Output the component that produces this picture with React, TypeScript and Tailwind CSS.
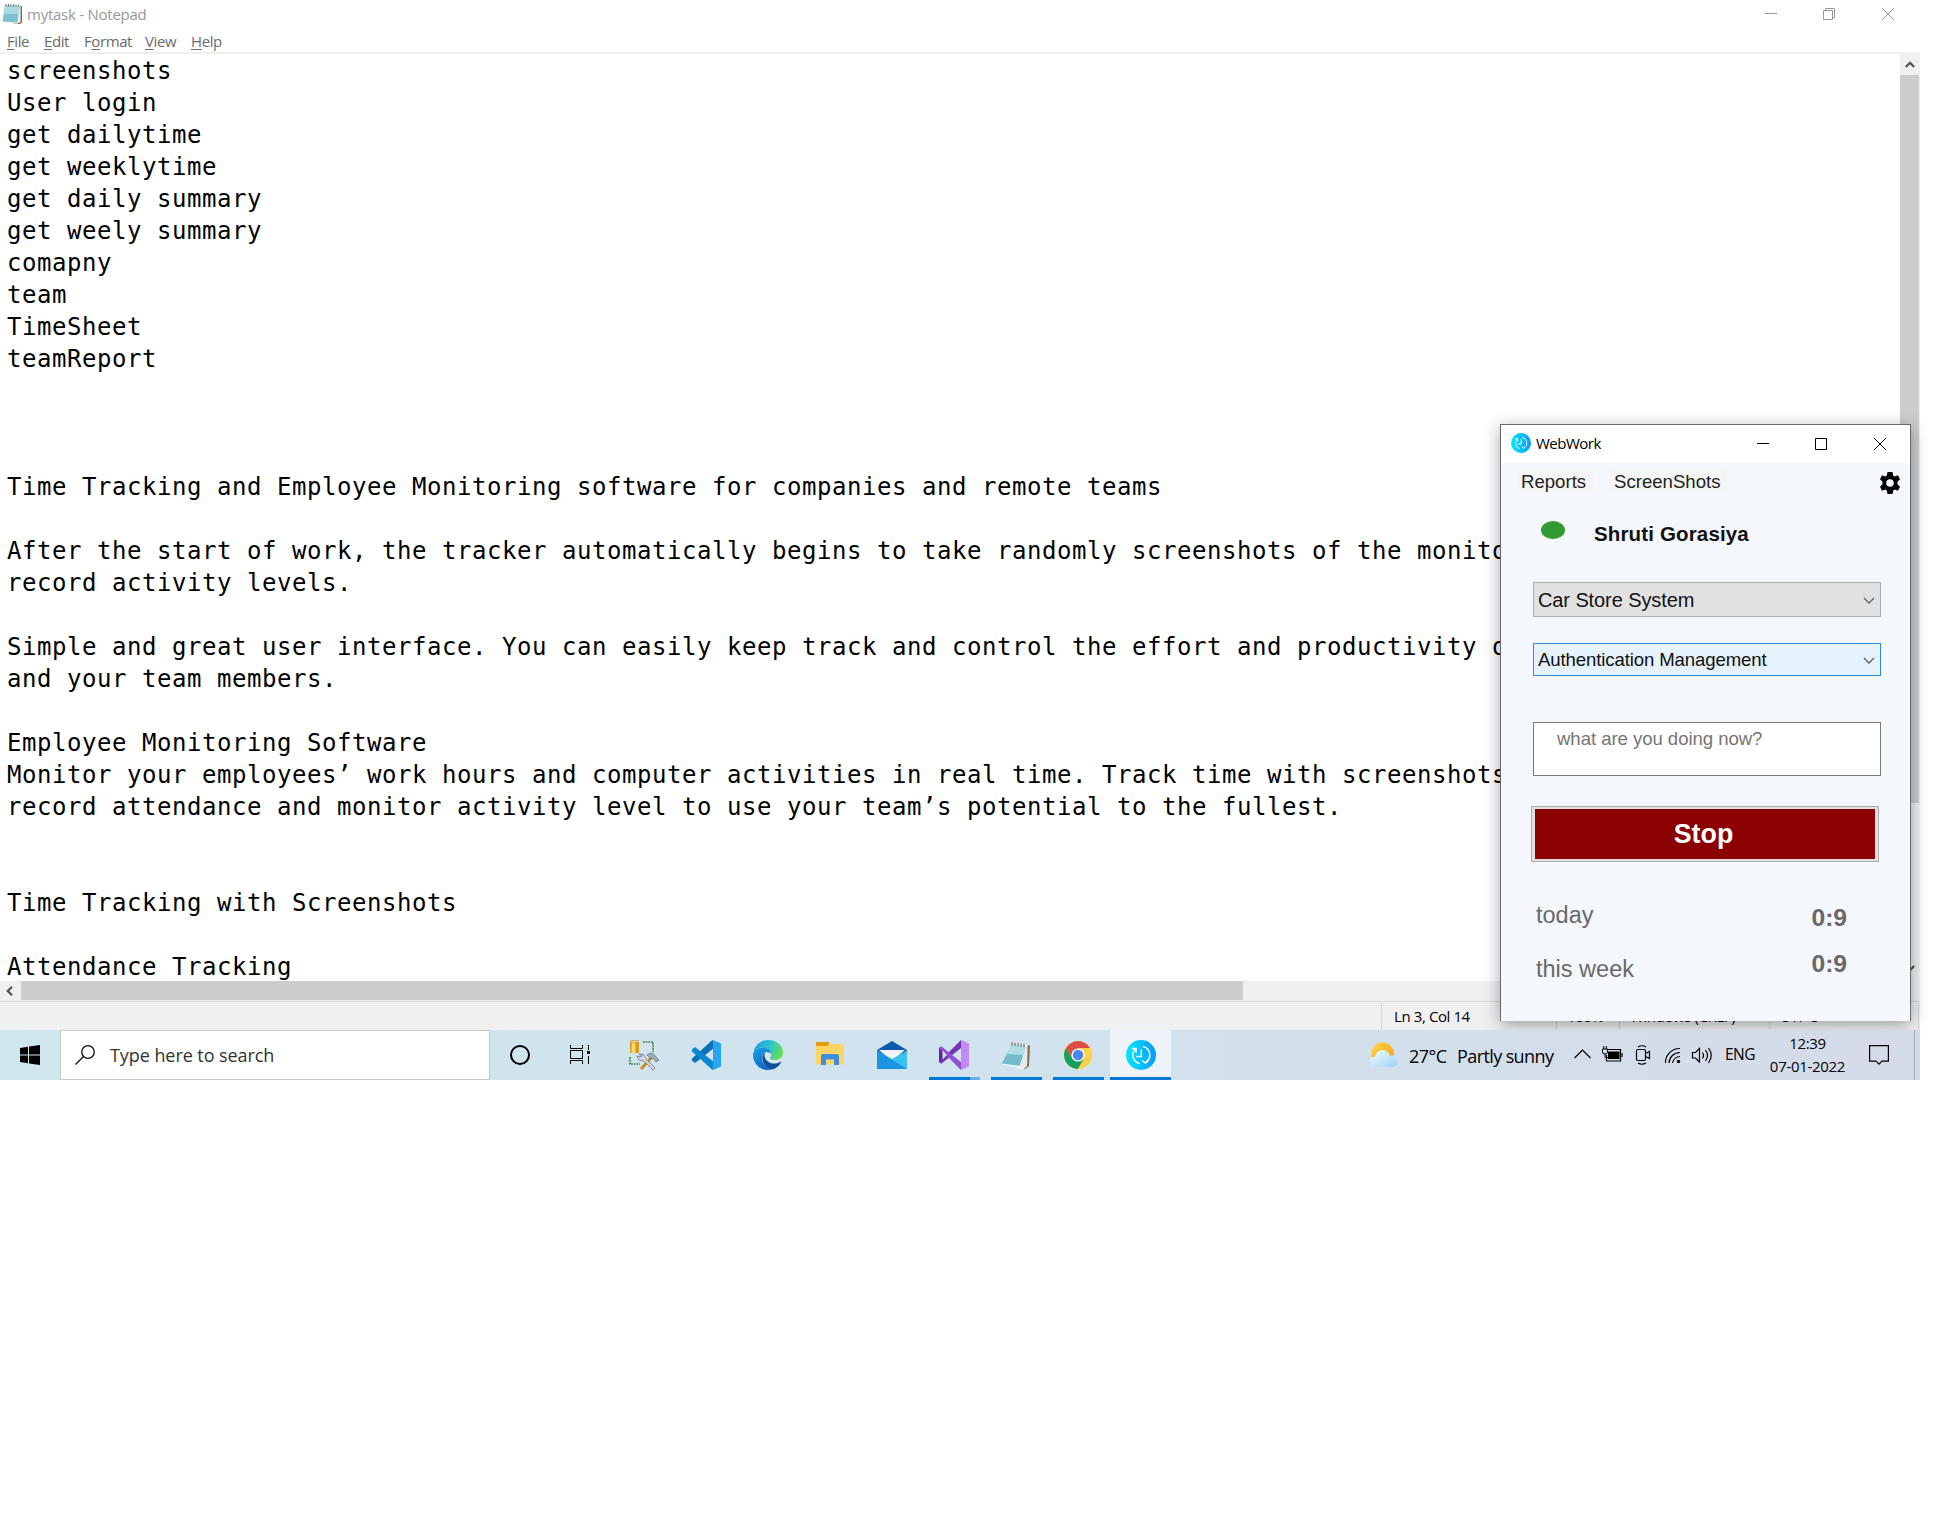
import React from "react";

const NOTE_LINES = [
  "screenshots",
  "User login",
  "get dailytime",
  "get weeklytime",
  "get daily summary",
  "get weely summary",
  "comapny",
  "team",
  "TimeSheet",
  "teamReport",
  "",
  "",
  "",
  "Time Tracking and Employee Monitoring software for companies and remote teams",
  "",
  "After the start of work, the tracker automatically begins to take randomly screenshots of the monitor",
  "record activity levels.",
  "",
  "Simple and great user interface. You can easily keep track and control the effort and productivity of",
  "and your team members.",
  "",
  "Employee Monitoring Software",
  "Monitor your employees’ work hours and computer activities in real time. Track time with screenshots,",
  "record attendance and monitor activity level to use your team’s potential to the fullest.",
  "",
  "",
  "Time Tracking with Screenshots",
  "",
  "Attendance Tracking",
];

function NotepadIcon({ className }: { className: string }) {
  return (
    <svg viewBox="0 0 30 30" className={className}>
      <path d="M10 3 29 5.500 28 26 24 29 22 27Z" fill="#86704d" />
      <path d="M10 3 26.500 5 26 26 22 29 2 24.500Z" fill="#f3f6f6" />
      <path d="M10.500 4.500 25 7 18.500 26 1 23.500Z" fill="#74bccb" />
      <path d="M10.500 5 25 7.500 22 15 6 14Z" fill="#b1dde4" />
      <path d="M19 26 25.500 8 25 26 22 28.500Z" fill="#e4e8ea" />
      <path d="M11 2.500v3M14 2.800v3M17 3.200v3M20 3.600v3M23 4v3" stroke="#555" strokeWidth="1" />
    </svg>
  );
}

function NotepadTitleIcon() {
  return (
    <svg viewBox="0 0 20 20" className="ml-[2px] mt-[4px] h-[20px] w-[20px]">
      <path d="M4 1.500 20 2V19L17.500 20 5 18.500Z" fill="#86704d" />
      <path d="M3 1.500 18.500 2V18L15 19.500 1.500 18.500Z" fill="#eef3f4" />
      <path d="M3 1.500 17.500 2.500 15.500 18.500.5 17.500Z" fill="#7cc2d0" />
      <path d="M3 2 17.500 3 16.500 10 2 10Z" fill="#a9dbe4" />
      <path d="M4 0v2.500M6.500 0v2.500M9 0v2.500M11.500.2v2.500M14 .4v2.500M16.500.6v2.500" stroke="#777" strokeWidth="1" />
    </svg>
  );
}

function WebWorkIcon({ className, id }: { className: string; id: string }) {
  return (
    <svg viewBox="0 0 30 30" className={className}>
      <defs>
        <linearGradient id={id} x1="0" x2="1" y1="0" y2="0">
          <stop offset="0" stopColor="#00e8ff" />
          <stop offset="1" stopColor="#0a99ff" />
        </linearGradient>
      </defs>
      <circle cx="15" cy="15" r="15" fill={`url(#${id})`} />
      <g fill="none" stroke="#fff" strokeWidth="1.500">
        <path d="M9.800 8.500A8.700 8.700 0 0 0 13.800 23.600" />
        <path d="M5.800 8.500h4.200v4.500" />
        <path d="M17 6.600A8.700 8.700 0 0 1 19.500 22.600M16 20.500l3.300 2.500 3-3.500" />
        <path d="M15.300 9.500v7h-5" />
      </g>
    </svg>
  );
}

function Chevron({ className, stroke }: { className: string; stroke: string }) {
  return (
    <svg viewBox="0 0 12 7" className={className} fill="none" stroke={stroke} strokeWidth="1.300">
      <path d="M1 1l5 5 5-5" />
    </svg>
  );
}

function Notepad() {
  return (
    <section className="flex h-[1030px] flex-col bg-white">
      <header className="flex h-[30px] items-start text-[#999]">
        <NotepadTitleIcon />
        <span className="ml-[5px] w-[1738px] text-[15px] leading-[29px] tracking-[-0.25px]">mytask - Notepad</span>
        <svg viewBox="0 0 130 14" className="mt-[7px] h-[14px] w-[130px]" fill="none" stroke="#999">
          <path d="M0 6.500h12M58.500 3.500h9v9h-9zM60.500 3.500v-2h9v9h-2" />
          <path d="M117 1l12 12M129 1l-12 12" />
        </svg>
      </header>
      <nav className="flex h-[22px] pl-[7px] text-[15px] leading-[23px] tracking-[-0.4px] text-[#6b6b6b]">
        <span className="w-[37px]"><u className="underline-offset-2">F</u>ile</span>
        <span className="w-[40px]"><u className="underline-offset-2">E</u>dit</span>
        <span className="w-[61px]">F<u className="underline-offset-2">o</u>rmat</span>
        <span className="w-[46px]"><u className="underline-offset-2">V</u>iew</span>
        <span><u className="underline-offset-2">H</u>elp</span>
      </nav>
      <div className="h-[2px] shrink-0 bg-[#f0f0f0]" />
      <div className="flex h-[927px]">
        <pre className="w-[1900px] overflow-hidden pl-[7px] pt-px font-['DejaVu_Sans_Mono',monospace] text-[24px] leading-[32px] tracking-[0.552px] text-black">
          {NOTE_LINES.join("\n")}
        </pre>
        <div className="flex w-[20px] flex-col items-center bg-[#f0f0f0]">
          <div className="flex h-[21px] items-center">
            <svg viewBox="0 0 10 7" className="mr-px h-[7px] w-[10px]" fill="none" stroke="#505050" strokeWidth="2.200">
              <path d="M.8 6 5 1.800 9.200 6" />
            </svg>
          </div>
          <div className="mr-px h-[728px] w-[19px] bg-[#cdcdcd]" />
          <svg viewBox="0 0 10 7" className="mt-[162px] h-[7px] w-[10px]" fill="none" stroke="#505050" strokeWidth="2.200">
            <path d="M.8 1 5 5.200 9.200 1" />
          </svg>
        </div>
      </div>
      <div className="flex h-[20px] bg-[#f0f0f0]">
        <div className="flex w-[21px] items-center pl-[6px]">
          <svg viewBox="0 0 7 10" className="h-[10px] w-[7px]" fill="none" stroke="#505050" strokeWidth="2.200">
            <path d="M6 .8 1.800 5 6 9.200" />
          </svg>
        </div>
        <div className="h-[19px] w-[1222px] bg-[#cdcdcd]" />
      </div>
      <footer className="flex h-[29px] border-t border-[#d7d7d7] bg-[#f0f0f0] pt-px text-[15px] leading-[26px] tracking-[-0.4px] text-black">
        <span className="ml-[1381px] h-[26px] w-[175px] border-l border-[#d4d4d4] pl-[12px]">Ln 3, Col 14</span>
        <span className="h-[26px] w-[63px] border-l border-[#d4d4d4] pl-[10px]">100%</span>
        <span className="h-[26px] w-[150px] border-l border-[#d4d4d4] pl-[10px]">Windows (CRLF)</span>
        <span className="h-[26px] w-[150px] border-x border-[#d4d4d4] pl-[10px]">UTF-8</span>
      </footer>
    </section>
  );
}

function WebWork() {
  return (
    <section className="absolute left-[1500px] top-[424px] flex h-[597px] w-[411px] flex-col border border-b-0 border-[#66686b] bg-[#f4f7fc] font-['Liberation_Sans',sans-serif] shadow-[0_4px_16px_rgba(0,0,0,0.35)]">
      <header className="flex h-[38px] items-center bg-white font-['Open_Sans','Noto_Sans',sans-serif]">
        <WebWorkIcon id="ww-title" className="mb-[2px] ml-[10px] h-[20px] w-[20px]" />
        <span className="mb-px ml-[5px] w-[220px] text-[15px] tracking-[-0.5px] text-black">WebWork</span>
        <svg viewBox="0 0 131 14" className="h-[14px] w-[131px]" fill="none" stroke="#000">
          <path d="M1 6.500h12M59.500 1.500h11v11h-11z" />
          <path d="M118 1l12 12M130 1l-12 12" />
        </svg>
      </header>
      <nav className="flex h-[58px] items-start pl-[17px] pt-[7px] text-[18.600px] leading-[22px] text-[#222]">
        <span className="h-[21px] w-[75px] bg-[#f5f5f5] pl-[3px] pt-px">Reports</span>
        <span className="ml-[17px] h-[21px] w-[117px] bg-[#f5f5f5] pl-[4px] pt-px">ScreenShots</span>
        <svg viewBox="0 0 20 22" className="ml-[153px] mt-[2px] h-[22px] w-[20px]">
          <path
            fillRule="evenodd"
            d="M7.500 0h5l.7 3.500 1.500.9L18 3.200l2 4-2.500 2.500v2.600L20 14.800l-2 4-3.300-1.200-1.500.9-.7 3.500h-5l-.7-3.500-1.500-.9L2 18.800l-2-4 2.500-2.500V9.700L0 7.200l2-4 3.300 1.200 1.500-.9ZM10 7.200a3.800 3.800 0 1 0 0 7.600 3.800 3.800 0 0 0 0-7.600Z"
            fill="#000"
          />
        </svg>
      </nav>
      <div className="flex h-[61px] pl-[40px]">
        <div className="h-[18px] w-[24px] rounded-[50%] bg-[#339933]" />
        <span className="ml-[29px] text-[20.500px] font-bold leading-[25px] tracking-[0.15px] text-[#111]">Shruti Gorasiya</span>
      </div>
      <div className="ml-[32px] flex h-[35px] w-[348px] items-center justify-between border border-[#adadad] bg-[#e1e1e1] pl-[4px] pr-[5px] text-[20px] text-[#111]">
        <span className="tracking-[-0.1px]">Car Store System</span>
        <Chevron className="mt-[2px] h-[7px] w-[12px]" stroke="#606060" />
      </div>
      <div className="ml-[32px] mt-[26px] flex h-[33px] w-[348px] items-center justify-between border border-[#2a8ddd] bg-[#e5f1fb] pl-[4px] pr-[5px] text-[18.600px] text-[#111]">
        <span className="pt-px tracking-[-0.12px]">Authentication Management</span>
        <Chevron className="mt-[2px] h-[7px] w-[12px]" stroke="#606060" />
      </div>
      <div className="ml-[32px] mt-[46px] h-[54px] w-[348px] border border-[#7a7a7a] bg-white pl-[23px] pt-[4px] text-[18.600px] leading-[24px] tracking-[-0.06px] text-[#757575]">
        what are you doing now?
      </div>
      <button className="ml-[30px] mt-[30px] flex h-[56px] w-[348px] items-center justify-center border border-[#adadad] bg-[#e1e1e1] p-[3px]">
        <span className="flex h-[50px] w-[340px] items-center justify-center bg-[#8b0000] pr-[3px] pt-px text-[26.800px] font-bold text-white">Stop</span>
      </button>
      <div className="flex h-[150px] justify-between pl-[35px] pr-[63px] text-[#696969]">
        <div className="flex flex-col pt-[38px] text-[23.500px] leading-[30px]">
          <span className="mb-[24px]">today</span>
          <span>this week</span>
        </div>
        <div className="flex flex-col pt-[41px] text-[24.600px] font-bold leading-[30px]">
          <span className="mb-[16px]">0:9</span>
          <span>0:9</span>
        </div>
      </div>
    </section>
  );
}

function SqlToolsIcon() {
  return (
    <svg viewBox="0 0 30 30" className="h-[30px] w-[30px]">
      <rect x="1" y="1" width="9" height="12" rx="1.500" fill="#d9961a" />
      <rect x="2.500" y="1" width="4" height="12" fill="#fbd775" />
      <ellipse cx="5.500" cy="1.600" rx="4.500" ry="1.300" fill="#f3d78b" stroke="#9b7420" strokeWidth=".5" />
      <path d="M14 2h10v10M1 17v7h10" fill="none" stroke="#3d7a41" strokeWidth="1.700" strokeDasharray="1.700 1" />
      <path d="M12 29 23 17" stroke="#c98d1e" strokeWidth="3" />
      <path d="M18 15c3-3 7-2 9 2l3 3-3 2-2-3-4-1Z" fill="#9fa9bc" stroke="#626b7c" strokeWidth=".7" />
      <path d="M10 14l5 1 2 4 9 9-2 2-9-9-5-1-2-4 4 1 1-1Z" fill="#d3d9e4" stroke="#6c7484" strokeWidth=".8" />
    </svg>
  );
}

function VsCodeIcon() {
  return (
    <svg viewBox="0 0 30 30" className="h-[30px] w-[30px]">
      <path d="M22 0 23 8 4 23 .8 20.500V18.800L20 1.200Z" fill="#0b70b8" />
      <path d="M22 30 23 22 4 7 .8 9.500v1.700L20 28.800Z" fill="#0d86d4" />
      <path d="M22 0 30 3.500v23L22 30Z" fill="#25a5f2" />
    </svg>
  );
}

function EdgeIcon() {
  return (
    <svg viewBox="0 0 30 30" className="h-[30px] w-[30px]">
      <defs>
        <linearGradient id="edge-top" x1="0" x2="1" y1="0.300" y2="0.600">
          <stop offset="0" stopColor="#1b9de2" />
          <stop offset=".5" stopColor="#2cc4cf" />
          <stop offset="1" stopColor="#67e04b" />
        </linearGradient>
        <linearGradient id="edge-left" x1="0" x2="0.500" y1="0" y2="1">
          <stop offset="0" stopColor="#1da1e6" />
          <stop offset="1" stopColor="#0668c8" />
        </linearGradient>
      </defs>
      <path d="M.5 12C2 5 8 0 15 0c9 0 15 6 15 12.500 0 5-4 7.500-8 7.500-3 0-5-1-5-2 0-.8 1.500-1.500 1.500-4C18.500 10 14 7.500 9.500 7.500 5 7.500 2 9.500.5 12Z" fill="url(#edge-top)" />
      <path d="M0 15C0 11 4 7.500 9.500 7.500c4.500 0 9 2.500 9 6.500-1-1.200-2.500-2-4.500-2-3.500 0-5 3-5 6 0 6 5 11 10 11.500C8 32 0 24 0 15Z" fill="url(#edge-left)" />
      <path d="M12 12.500C7 15 9 28 19 29.500c4-.9 7-3.500 9-7 .3-.7-.2-1-1-.5-7 4-15 0-15.500-6.500 0-1 .1-2 .5-3Z" fill="#11509e" />
    </svg>
  );
}

function ExplorerIcon() {
  return (
    <svg viewBox="0 0 28 24" className="mb-[2px] h-[24px] w-[28px]">
      <path d="M0 1q0-1 1-1h11q1.500 0 1.500 1.500V5H0Z" fill="#e39c05" />
      <path d="M0 4h11l2.500-2H27q1 0 1 1v18.500q0 1-1 1H1q-1 0-1-1Z" fill="#fed563" />
      <path d="M5 23V14q0-2 2-2h14q2 0 2 2v9h-5v-5.500h-8V23Z" fill="#3b8fdc" />
    </svg>
  );
}

function MailIcon() {
  return (
    <svg viewBox="0 0 30 28" className="h-[28px] w-[30px]">
      <path d="M0 9 15 0l15 9v8H0Z" fill="#0a5bab" />
      <path d="M2 9h26L15 20Z" fill="#f3f4f5" />
      <path d="M0 9.500 15 18l15-8.500V28H0Z" fill="#39c1f2" />
      <path d="M0 9.500V28h30Z" fill="#1b94e1" />
    </svg>
  );
}

function VisualStudioIcon() {
  return (
    <svg viewBox="0 0 30 30" className="h-[30px] w-[30px]">
      <path d="M0 8 2.500 6.500 4.500 9v12l-2 2.500L0 22Z" fill="#6026a2" />
      <path d="M2.500 23.500 22 8V0L0 22Z" fill="#7433b4" />
      <path d="M2.500 6.500 22 22v8L0 8Z" fill="#9350ce" />
      <path d="M3.500 10.500v9L8 15Z" fill="#d1e4ee" />
      <path d="M22 0 30 3.500v23L22 30Z" fill="#c18af4" />
    </svg>
  );
}

function ChromeIcon() {
  return (
    <svg viewBox="0 0 28 28" className="h-[28px] w-[28px]">
      <circle cx="14" cy="14" r="14" fill="#ffd04a" />
      <path d="M14 14V7h12.100A14 14 0 0 0 1.900 7l6 10.500Z" fill="#dc4f42" />
      <path d="M14 14 20 17.500 14 28A14 14 0 0 1 1.900 7L8 17.500Z" fill="#159e5c" />
      <path d="M14 7h12.100A14 14 0 0 1 14 28l6-10.500Z" fill="#ffd04a" />
      <circle cx="14" cy="14" r="6.600" fill="#fff" />
      <circle cx="14" cy="14" r="5.200" fill="#4a86ee" />
    </svg>
  );
}

function WeatherIcon() {
  return (
    <svg viewBox="0 0 28 26" className="h-[26px] w-[28px]">
      <defs>
        <linearGradient id="sun" x1="0" x2="1" y1="0" y2="1">
          <stop offset="0" stopColor="#ffd84d" />
          <stop offset="1" stopColor="#f59a0b" />
        </linearGradient>
        <linearGradient id="cloud" x1="0" x2="1" y1="0" y2="1">
          <stop offset="0" stopColor="#f4fbff" />
          <stop offset="1" stopColor="#9fd2f3" />
        </linearGradient>
      </defs>
      <circle cx="12.500" cy="11.800" r="11.300" fill="url(#sun)" />
      <path d="M5 25a5.300 5.300 0 0 1 0-10.500C7 6 18 6 20 13.500c4-.5 7.500 2 7.500 5.800S25 25 22 25Z" fill="url(#cloud)" />
    </svg>
  );
}

function TaskButton({ children, bar, active }: { children: React.ReactNode; bar?: "one" | "many"; active?: boolean }) {
  return (
    <div className={active ? "flex h-[50px] w-[61px] flex-col items-center bg-[#edf3f9]" : "flex h-[50px] w-[62px] flex-col items-center"}>
      <div className="flex h-[47px] items-center pt-[3px]">{children}</div>
      {bar && (
        <div className={active ? "flex h-[3px] w-full" : "flex h-[3px] w-[51px]"}>
          <div className="flex-1 bg-[#0078d7]" />
          {bar === "many" && <div className="w-[10px] bg-[#6aafe6]" />}
        </div>
      )}
    </div>
  );
}

function Taskbar() {
  return (
    <footer className="flex h-[50px] items-center bg-linear-to-r from-[#cfe6ee] via-[#d1e3ee] to-[#d5dae8] text-black">
      <div className="flex w-[60px] justify-center">
        <svg viewBox="0 0 20 20" className="h-[20px] w-[20px]">
          <path d="M0 3 8 1.800V9.400H0ZM9 1.600 20 0V9.400H9ZM0 10.500h8V18.200L0 17ZM9 10.500h11V20L9 18.400Z" fill="#000" />
        </svg>
      </div>
      <div className="flex h-[50px] w-[430px] items-center border border-[#c6c8ca] bg-white pl-[14px]">
        <svg viewBox="0 0 20 20" className="h-[20px] w-[20px]" fill="none" stroke="#111" strokeWidth="1.300">
          <circle cx="13" cy="7" r="6.300" />
          <path d="M8.500 11.500.5 19.500" />
        </svg>
        <span className="ml-[15px] text-[18px] tracking-[-0.07px] text-[#333]">Type here to search</span>
      </div>
      <div className="-ml-px flex w-[881px]">
        <TaskButton>
          <div className="h-[20px] w-[20px] rounded-full border-[2.500px] border-black" />
        </TaskButton>
        <TaskButton>
          <svg viewBox="0 0 20 20" className="mr-[4px] h-[20px] w-[20px]" fill="none" stroke="#000" strokeWidth="1">
            <path d="M.5 0v3.500h12V0M.5 5.500h12v8H.5zM.5 19v-3.500h12V19M18.500 0v5M18.500 11v8" />
            <path d="M17 6h3v3h-3z" fill="#000" stroke="none" />
          </svg>
        </TaskButton>
        <TaskButton><SqlToolsIcon /></TaskButton>
        <TaskButton><VsCodeIcon /></TaskButton>
        <TaskButton><EdgeIcon /></TaskButton>
        <TaskButton><ExplorerIcon /></TaskButton>
        <TaskButton><MailIcon /></TaskButton>
        <TaskButton bar="many"><VisualStudioIcon /></TaskButton>
        <TaskButton bar="one"><NotepadIcon className="h-[30px] w-[30px]" /></TaskButton>
        <TaskButton bar="one"><ChromeIcon /></TaskButton>
        <div className="ml-px">
          <TaskButton bar="one" active><WebWorkIcon id="ww-task" className="h-[30px] w-[30px]" /></TaskButton>
        </div>
      </div>
      <WeatherIcon />
      <span className="ml-[11px] w-[48px] whitespace-nowrap pt-[3px] text-[18px] tracking-[-0.5px]">27°C</span>
      <span className="w-[117px] whitespace-nowrap pt-[3px] text-[18px] tracking-[-0.6px]">Partly sunny</span>
      <svg viewBox="0 0 140 22" className="h-[22px] w-[140px]" fill="none" stroke="#000" strokeWidth="1.200">
        <path d="M.5 14 8.500 6l8 8" />
        <path d="M33.500 5.500h13v11.500h-14V11M48 9v4" />
        <path d="M34 7.500h11.500v7.500H34z" fill="#000" stroke="none" />
        <path d="M28.500 5h5v3q0 2-2.500 2t-2.500-2zM29.700 2v3M32.300 2v3M31 10v3.500h3" strokeWidth="1" />
        <path d="M64 5.500h6q1.500 0 1.500 1.500v8q0 1.500-1.500 1.500h-6q-1.500 0-1.500-1.500V7q0-1.500 1.500-1.500zM71.500 9.500l4-2v7l-4-2M64 3q4-2.500 8 0M64 19q4 2.500 8 0" />
        <path d="M91.500 19A14 14 0 0 1 106 4.500M95 19A11 11 0 0 1 106 8.500M98.500 19A8 8 0 0 1 106 12.500" />
        <circle cx="104.500" cy="17.500" r="1.700" fill="#000" stroke="none" />
        <path d="M118.500 8.500h3l4-4v13.500l-4-4h-3zM128.500 8.500q2 3 0 6M131.500 6q4 5.500 0 11M134.500 4q5.500 7.500 0 15" />
      </svg>
      <span className="ml-[11px] w-[43px] text-[15.500px] tracking-[-0.500px]">ENG</span>
      <div className="flex w-[79px] flex-col items-center whitespace-nowrap text-[15px] leading-[23px] tracking-[-0.3px]">
        <span>12:39</span>
        <span>07-01-2022</span>
      </div>
      <svg viewBox="0 0 20 20" className="ml-[22px] h-[20px] w-[20px]" fill="none" stroke="#000" strokeWidth="1.200">
        <path d="M.6.600h18.800v15.500h-6.400l-3 3-3-3H.6z" />
      </svg>
      <div className="ml-auto h-[50px] w-[6px] border-l border-[#a3adbb]" />
    </footer>
  );
}

export default function App() {
  return (
    <main className="h-[1536px] w-[1936px] overflow-hidden bg-white font-['Open_Sans','Noto_Sans',sans-serif]">
      <div className="relative flex h-[1080px] w-[1920px] flex-col">
        <Notepad />
        <WebWork />
        <div className="relative">
          <Taskbar />
        </div>
      </div>
    </main>
  );
}
